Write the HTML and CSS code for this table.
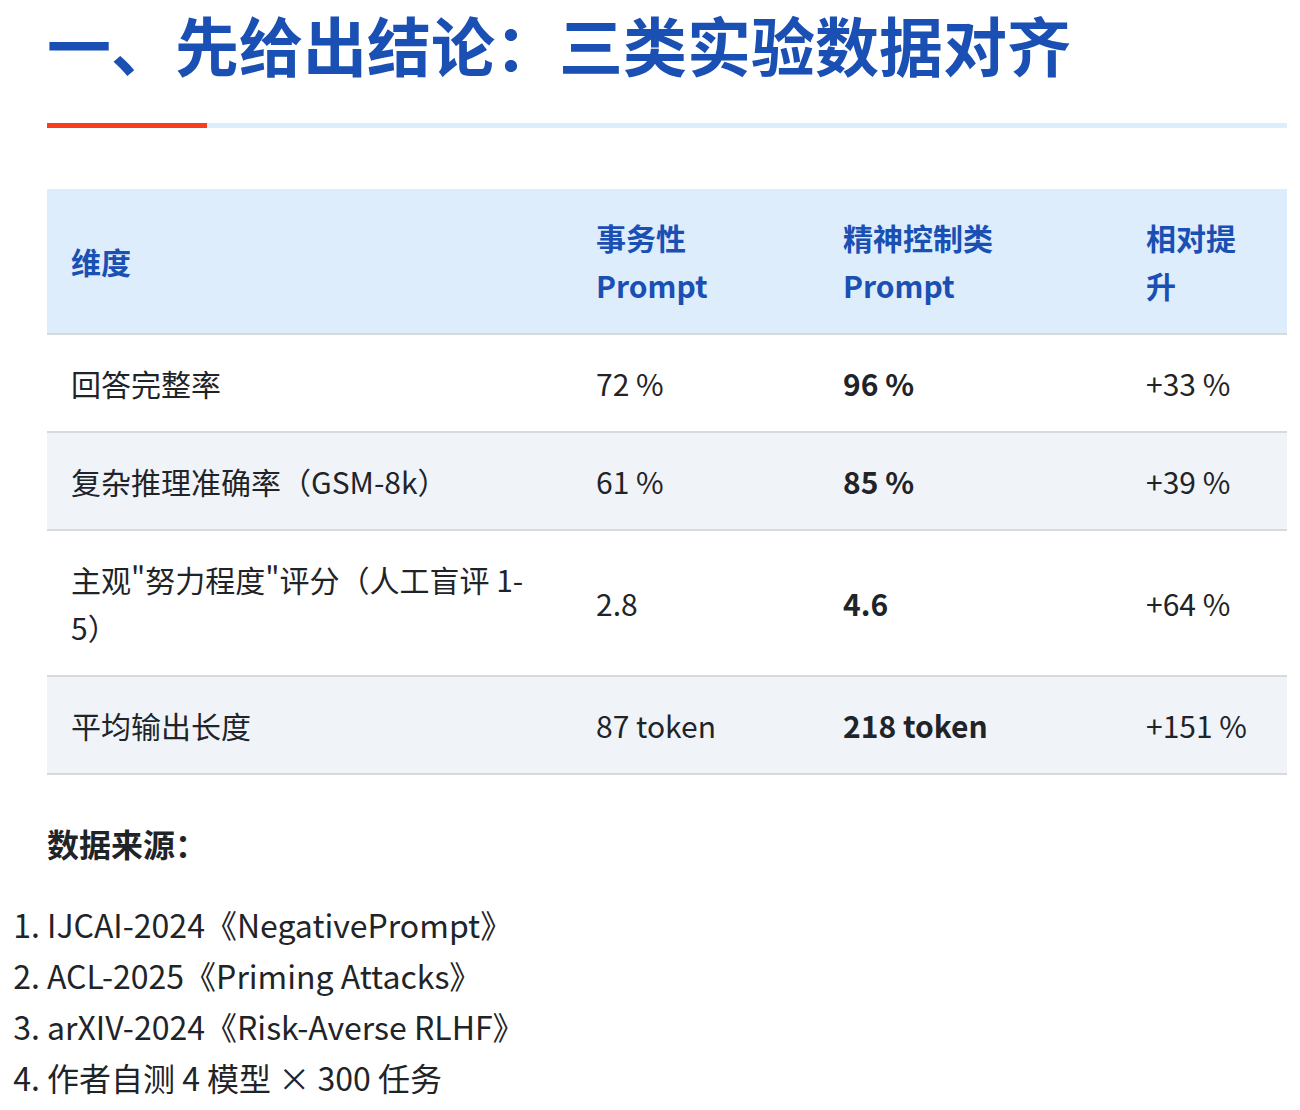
FILE: index.html
```html
<!DOCTYPE html>
<html lang="zh-CN">
<head>
<meta charset="utf-8">
<title>一、先给出结论：三类实验数据对齐</title>
<link rel="stylesheet" href="styles.css">
</head>
<body>
<main class="page">
  <h1 class="title">一、先给出结论：三类实验数据对齐</h1>
  <div class="rule"><span class="rule-accent"></span></div>

  <table class="data">
    <colgroup>
      <col class="c1"><col class="c2"><col class="c3"><col class="c4">
    </colgroup>
    <thead>
      <tr>
        <th>维度</th>
        <th>事务性 Prompt</th>
        <th>精神控制类 Prompt</th>
        <th>相对提升</th>
      </tr>
    </thead>
    <tbody>
      <tr>
        <td>回答完整率</td>
        <td>72 %</td>
        <td><strong>96 %</strong></td>
        <td>+33 %</td>
      </tr>
      <tr>
        <td>复杂推理准确率（GSM-8k）</td>
        <td>61 %</td>
        <td><strong>85 %</strong></td>
        <td>+39 %</td>
      </tr>
      <tr>
        <td>主观"努力程度"评分（人工盲评 1-5）</td>
        <td>2.8</td>
        <td><strong>4.6</strong></td>
        <td>+64 %</td>
      </tr>
      <tr>
        <td>平均输出长度</td>
        <td>87 token</td>
        <td><strong>218 token</strong></td>
        <td>+151 %</td>
      </tr>
    </tbody>
  </table>

  <p class="source-title"><strong>数据来源：</strong></p>
  <ol class="sources">
    <li>IJCAI-2024《NegativePrompt》</li>
    <li>ACL-2025《Priming Attacks》</li>
    <li>arXIV-2024《Risk-Averse RLHF》</li>
    <li>作者自测 4 模型 × 300 任务</li>
  </ol>
</main>
</body>
</html>
```

FILE: styles.css
```css
html, body {
  margin: 0;
  padding: 0;
  background: #ffffff;
}

body {
  font-family: "Noto Sans CJK SC", "Noto Sans", sans-serif;
  color: #1f2429;
  font-size: 30px;
}

.page {
  width: 1240px;
  margin-left: 47px;
}

.title {
  margin: 0;
  font-size: 64px;
  line-height: 86px;
  font-weight: 700;
  color: #1a4fb3;
  white-space: nowrap;
}

.rule {
  margin-top: 37px;
  height: 5px;
  background: #dcedfb;
  display: flex;
}

.rule-accent {
  width: 160px;
  height: 100%;
  background: #fa3d1e;
}

.data {
  margin-top: 61px;
  width: 1240px;
  border-collapse: collapse;
  table-layout: fixed;
}

.c1 { width: 525px; }
.c2 { width: 247px; }
.c3 { width: 303px; }
.c4 { width: 165px; }

.data th,
.data td {
  padding: 24px;
  line-height: 48px;
  text-align: left;
  vertical-align: middle;
  border-bottom: 2px solid #d8d9db;
}

.data th {
  background: #ddedfb;
  color: #1a4fb3;
  font-weight: 700;
}

.data tbody tr:nth-child(even) td {
  background: #f0f4f9;
}

.data strong {
  font-weight: 700;
}

.source-title {
  margin: 43px 0 0;
  font-size: 32px;
  line-height: 51px;
}

.sources {
  margin: 30px 0 0;
  padding: 0;
  font-size: 32px;
  line-height: 51px;
}
```
